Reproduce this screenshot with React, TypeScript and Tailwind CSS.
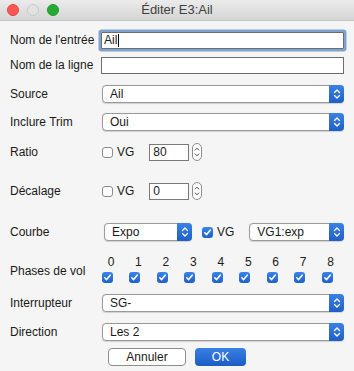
import React from "react";

const font = { fontFamily: '"Liberation Sans", Arial, sans-serif' };

// up/down chevrons used in the popup buttons
function Arrows({ color = "white" }: { color?: string }) {
  return (
    <svg width="8" height="12" viewBox="0 0 8 12" fill="none">
      <path d="M1.5 4.5 L4 2 L6.5 4.5" stroke={color} strokeWidth="1.4" strokeLinecap="round" strokeLinejoin="round" />
      <path d="M1.5 7.5 L4 10 L6.5 7.5" stroke={color} strokeWidth="1.4" strokeLinecap="round" strokeLinejoin="round" />
    </svg>
  );
}

function Select({ value, className = "" }: { value: string; className?: string }) {
  return (
    <div
      className={
        "flex h-[18px] items-stretch rounded-[4px] border border-[#9a9a9a] bg-white shadow-[0_0.5px_1px_rgba(0,0,0,0.15)] " +
        className
      }
    >
      <div className="flex flex-1 items-center pl-[7px] text-[12px] text-[#1a1a1a]">{value}</div>
      <div className="-my-px -mr-px flex w-[15px] items-center justify-center rounded-r-[4px] bg-gradient-to-b from-[#3b82e6] to-[#1d5fc7]">
        <Arrows />
      </div>
    </div>
  );
}

function Check({ checked }: { checked?: boolean }) {
  if (checked)
    return (
      <div className="flex h-[11px] w-[11px] items-center justify-center rounded-[3px] bg-gradient-to-b from-[#3a84ea] to-[#1f60c9]">
        <svg width="9" height="9" viewBox="0 0 9 9" fill="none">
          <path d="M1.8 4.8 L3.6 6.6 L7.2 2.2" stroke="white" strokeWidth="1.6" strokeLinecap="round" strokeLinejoin="round" />
        </svg>
      </div>
    );
  return <div className="h-[11px] w-[11px] rounded-[3px] border border-[#8c8c8c] bg-white" />;
}

function Stepper() {
  return (
    <div className="flex h-[18px] w-[10px] flex-col items-center justify-center rounded-full border border-[#8c8c8c] bg-white">
      <svg width="6" height="12" viewBox="0 0 6 12" fill="none">
        <path d="M1.2 4 L3 2.2 L4.8 4" stroke="#444" strokeWidth="1" strokeLinecap="round" />
        <path d="M1.2 8 L3 9.8 L4.8 8" stroke="#444" strokeWidth="1" strokeLinecap="round" />
      </svg>
    </div>
  );
}

function Label({ children }: { children: React.ReactNode }) {
  return <div className="w-[91px] shrink-0 text-[12px] text-[#1a1a1a]">{children}</div>;
}

function SpinRow({ label, value, className = "" }: { label: string; value: string; className?: string }) {
  return (
    <div className={"flex h-[20px] items-center " + className}>
      <Label>{label}</Label>
      <div className="ml-px flex items-center">
        <Check />
        <span className="ml-[4px] text-[12px] text-[#1a1a1a]">VG</span>
      </div>
      <div className="ml-[15px] flex h-[17px] w-[40px] items-center border border-[#7a7a7a] bg-white pl-[3px] text-[12px] text-[#1a1a1a]">
        {value}
      </div>
      <div className="ml-[3px]">
        <Stepper />
      </div>
    </div>
  );
}

export default function App() {
  const phases = [0, 1, 2, 3, 4, 5, 6, 7, 8];
  return (
    <div className="h-[371px] w-[354px] overflow-hidden bg-[#f5f5f5]" style={font}>
      {/* title bar */}
      <div className="relative flex h-[21px] items-center justify-center border-b border-[#c4c4c4] bg-gradient-to-b from-[#ebebeb] to-[#d5d5d5]">
        <div className="absolute left-[7px] top-[4px] flex gap-[8px]">
          <div className="h-[12px] w-[12px] rounded-full border border-[#e2463f] bg-[#fc5753]" />
          <div className="h-[12px] w-[12px] rounded-full border border-[#c9c9c9] bg-[#e3e3e3]" />
          <div className="h-[12px] w-[12px] rounded-full border border-[#1d9a2a] bg-[#27aa35]" />
        </div>
        <span className="text-[13px] text-[#404040]">Éditer E3:Ail</span>
      </div>

      <div className="flex flex-col px-[10px] pt-[9px]">
        <div className="flex h-[20px] items-center">
          <Label>Nom de l'entrée</Label>
          <div className="flex h-[17px] flex-1 items-center border border-[#6d6d6d] bg-white pl-[2px] text-[12px] text-[#1a1a1a] shadow-[0_0_0_2.5px_#7fa3d0] rounded-[1px]">
            Ail<span className="ml-px h-[13px] w-px bg-black" />
          </div>
        </div>

        <div className="mt-[5px] flex h-[20px] items-center">
          <Label>Nom de la ligne</Label>
          <div className="h-[17px] flex-1 border border-[#6d6d6d] bg-white" />
        </div>

        <div className="mt-[9px] flex h-[20px] items-center">
          <Label>Source</Label>
          <Select value="Ail" className="ml-px flex-1" />
        </div>

        <div className="mt-[8px] flex h-[20px] items-center">
          <Label>Inclure Trim</Label>
          <Select value="Oui" className="ml-px flex-1" />
        </div>

        <SpinRow label="Ratio" value="80" className="mt-[10px]" />
        <SpinRow label="Décalage" value="0" className="mt-[19px]" />

        <div className="mt-[21px] flex h-[20px] items-center">
          <Label>Courbe</Label>
          <Select value="Expo" className="ml-[3px] w-[88px]" />
          <div className="ml-[10px] flex items-center">
            <Check checked />
            <span className="ml-[4px] text-[12px] text-[#1a1a1a]">VG</span>
          </div>
          <Select value="VG1:exp" className="ml-[15px] flex-1" />
        </div>

        <div className="mt-[13px] flex h-[29px]">
          <div className="w-[87px] shrink-0 pt-[7px] text-[12px] text-[#1a1a1a]">Phases de vol</div>
          <div className="grid grid-cols-9">
            {phases.map((p) => (
              <div key={p} className="flex w-[28px] flex-col">
                <div className="h-[14px] text-center text-[12px] leading-[14px] text-[#1a1a1a]">{p}</div>
                <div className="ml-[5px] mt-[3px]">
                  <Check checked />
                </div>
              </div>
            ))}
          </div>
        </div>

        <div className="mt-[9px] flex h-[20px] items-center">
          <Label>Interrupteur</Label>
          <Select value="SG-" className="ml-px flex-1" />
        </div>

        <div className="mt-[9px] flex h-[20px] items-center">
          <Label>Direction</Label>
          <Select value="Les 2" className="ml-px flex-1" />
        </div>

        <div className="mt-[5px] flex h-[19px] items-center pl-[98px]">
          <div className="flex h-[18px] w-[78px] items-center justify-center rounded-[4px] border border-[#8e8e8e] bg-white text-[12px] text-[#1a1a1a]">
            Annuler
          </div>
          <div className="ml-[9px] flex h-[18px] w-[51px] items-center justify-center rounded-[4px] bg-gradient-to-b from-[#3a80e4] to-[#1c5cc4] text-[12px] text-white">
            OK
          </div>
        </div>
      </div>
    </div>
  );
}
